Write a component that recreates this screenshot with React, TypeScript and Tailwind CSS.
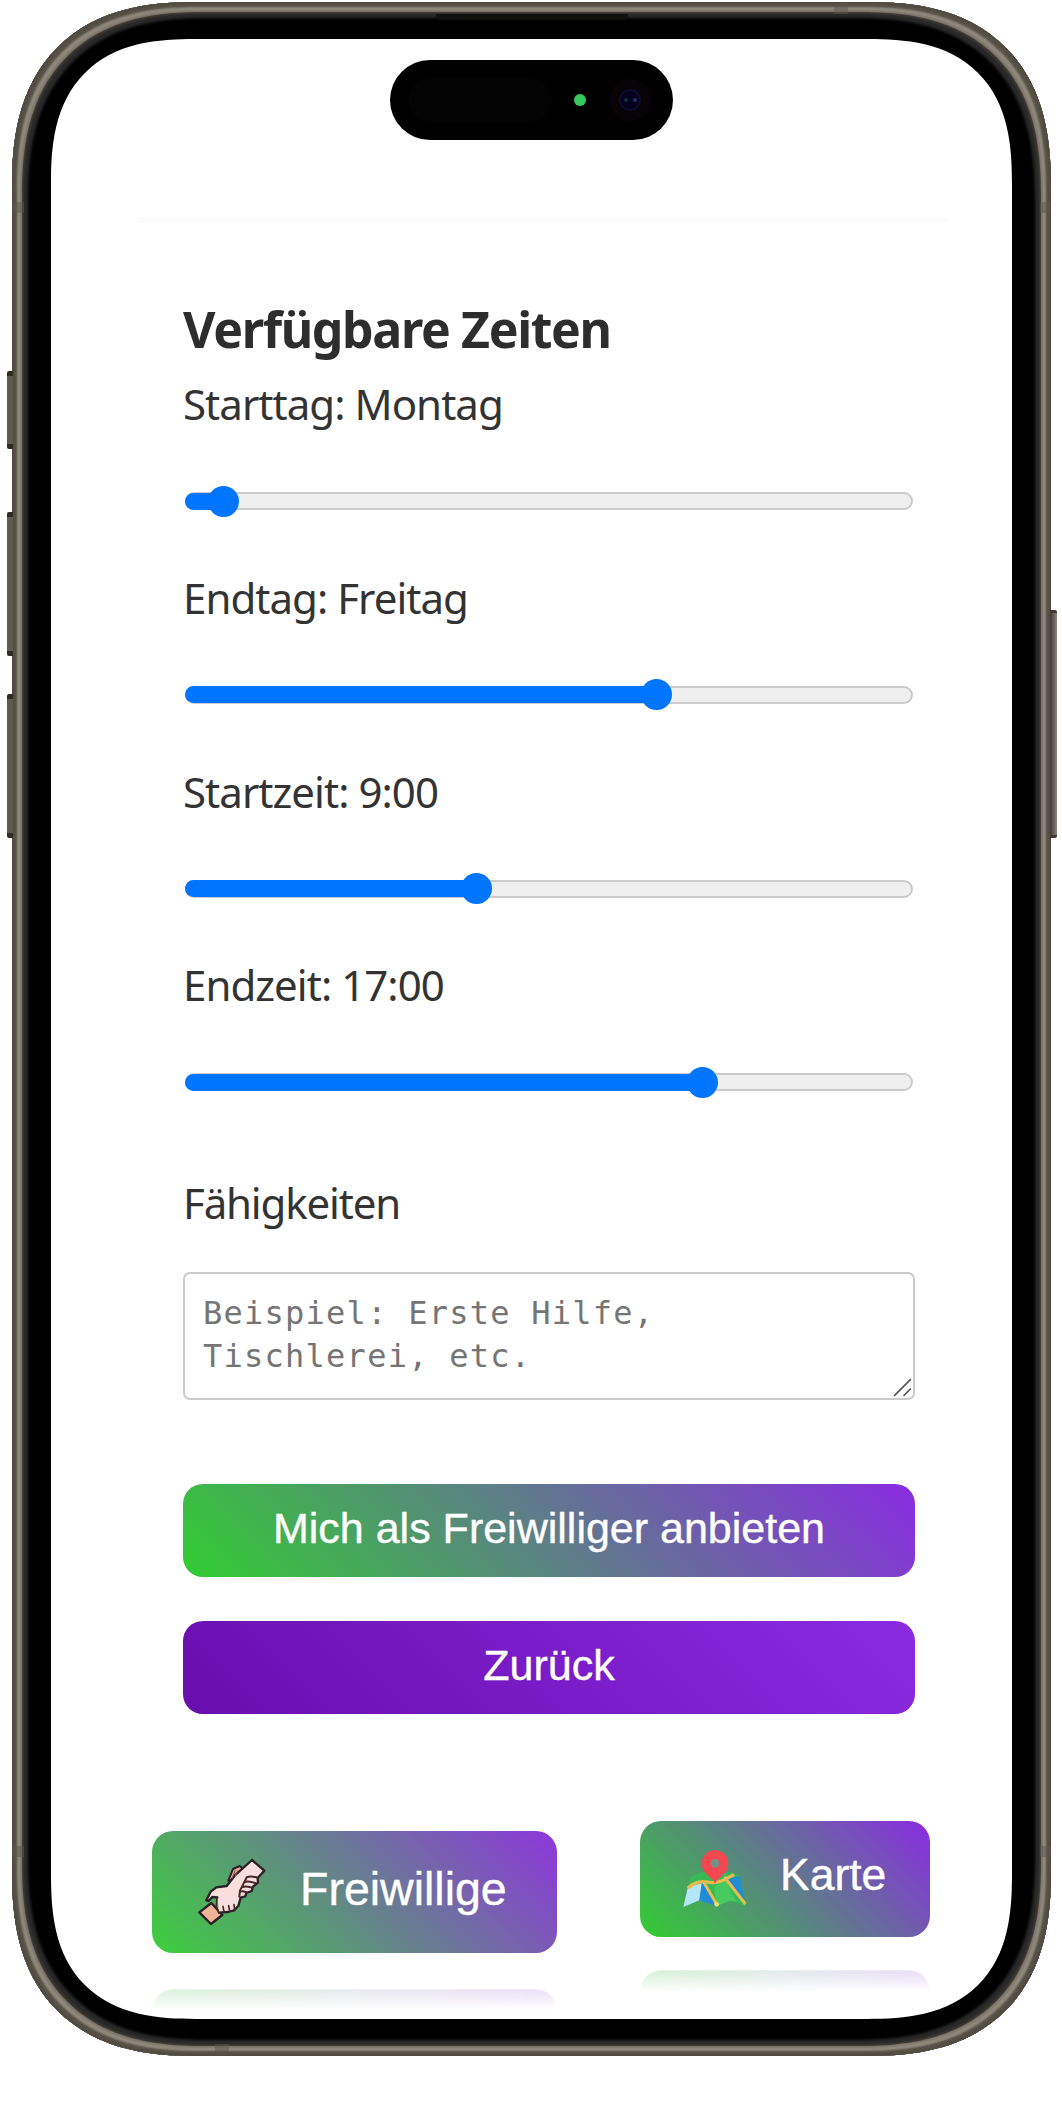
import React from "react";

const sliders = [
  { label: "Starttag: Montag", fill: 39 },
  { label: "Endtag: Freitag", fill: 472 },
  { label: "Startzeit: 9:00", fill: 292 },
  { label: "Endzeit: 17:00", fill: 518 },
];

function Slider({ label, fill }: { label: string; fill: number }) {
  return (
    <div className="flex h-[193.8px] flex-col gap-[52px]">
      <div className="text-[42px] leading-[58px] tracking-[-0.95px] whitespace-nowrap">{label}</div>
      <div className="grid h-8 items-center px-[2px]">
        <div className="col-start-1 row-start-1 h-[18px] rounded-full border-2 border-[#cbcbcb] bg-[#efefef]" />
        <div className="col-start-1 row-start-1 flex items-center">
          <div className="h-[17px] rounded-l-full bg-[#0075ff]" style={{ width: fill }} />
          <div className="-ml-4 size-[31px] rounded-full bg-[#0075ff]" />
        </div>
      </div>
    </div>
  );
}

function HandsIcon() {
  return (
    <svg className="h-[68px] w-[68px] shrink-0" viewBox="205 175 204 204" strokeLinejoin="round" strokeLinecap="round">
      <path d="M296 243 310 208 330 199 340 207 326 245Z" fill="#e9aa98" stroke="#2b2025" strokeWidth="6" />
      <path d="m209 338 36-28 33 36-34 27Z" fill="#edb495" stroke="#2b2025" strokeWidth="7" />
      <path d="M230 302 243 276 260 263 291 259 315 228 367 181 404 213 384 235 385 249 370 261 366 274 350 280 347 290 333 294 326 319 313 332 295 337 268 339 263 293 248 292 237 304Z" fill="#f8dfdb" />
      <path d="M263 293 248 292 237 304 230 302 243 276 260 263 291 259 315 228 367 181 404 213 384 235 385 249 370 261 366 274 350 280 347 290 333 294 326 319 313 332 295 337 268 339" fill="none" stroke="#2b2025" strokeWidth="7" />
      <path d="M262 292 260 322 267 339M280 320l3 16M297 318l3 17M313 315l2 16" fill="none" stroke="#46252b" strokeWidth="5" />
      <path d="M351 233c12-6 20-3 32 1M344 247c12-4 20 0 33 3M338 262c11-4 18-1 29 2M333 276c9-3 11 0 19 3M351 233l-20 40-2 18" fill="none" stroke="#46252b" strokeWidth="6" />
      <path d="m308 235 8-22M317 228l8-15" stroke="#8c4d4b" strokeWidth="3" />
    </svg>
  );
}

function MapIcon() {
  return (
    <svg className="h-[60px] w-[64px] shrink-0" viewBox="190 148 192 180">
      <path d="m211 234 34-18 94 3 21 11 19 91-47-17-43 16-49-19-48 21Z" fill="#37b957" />
      <path d="m205 261 42-10-8 51-48 20Z" fill="#b5e5f9" />
      <path d="m247 247 12 1 31 72-51-18Z" fill="#218bd5" />
      <path d="m318 239 42-10 16 76Z" fill="#218bd5" />
      <path d="m283 260 36-17 30 61-20-1-39 17Z" fill="#47cb5e" />
      <path d="M204 265c23-20 42-22 66-17 27 6 48-11 73-23" fill="none" stroke="#e5bd4d" strokeWidth="10" />
      <path d="m252 247 39 67M314 232l63 81" fill="none" stroke="#e7be4f" strokeWidth="9" />
      <circle cx="291" cy="314" r="7" fill="#eddf6b" />
      <path d="M286 252c-8-21-40-29-40-61a40 40 0 0 1 80 0c0 32-30 39-40 61Z" fill="#f44850" />
      <circle cx="286" cy="191" r="13" fill="#759087" />
    </svg>
  );
}

export default function App() {
  return (
    <div className="h-[2128px] w-[1062px] overflow-hidden bg-white pt-[2px] pl-[12px] font-['Noto_Sans',sans-serif] text-[#333]">
      <div className="relative h-[2054px] w-[1039px] rounded-[158px] bg-black px-[39px] py-[37px] shadow-[inset_0_0_1px_2px_#514c42,inset_0_0_2px_5px_#565147,inset_0_0_1px_8px_#8f897d,inset_0_0_1px_10px_#827b70,inset_0_0_1px_12px_#393530,inset_0_0_3px_16px_#292a29] supports-[corner-shape:squircle]:rounded-[185px] supports-[corner-shape:squircle]:[corner-shape:superellipse(1.3)]">
        {/* Hardware keys on both edges of the frame */}
        <div className="absolute top-[369px] -left-[5px] flex w-[6px] flex-col">
          <span className="h-[78px] rounded-l-[2px] border-y-[5px] border-[#302c23] bg-[#615b4e]" />
          <span className="mt-[63px] h-[144px] rounded-l-[2px] border-y-[5px] border-[#302c23] bg-[#615b4e]" />
          <span className="mt-[38px] h-[144px] rounded-l-[2px] border-y-[5px] border-[#302c23] bg-[#615b4e]" />
        </div>
        <div className="absolute top-[608px] -right-[6px] h-[228px] w-[7px] rounded-r-[2px] border-y-[3px] border-[#403a32] bg-gradient-to-r from-[#403a32] to-[#8b857b]" />
        {/* Antenna bands and earpiece */}
        <div className="absolute inset-x-0 top-[200px] flex h-[1655px] flex-col justify-between">
          <div className="flex justify-between">
            <span className="h-[11px] w-[12px] bg-[#59554d]/50" />
            <span className="h-[11px] w-[11px] bg-[#59554d]/50" />
          </div>
          <div className="flex justify-between">
            <span className="h-[11px] w-[12px] bg-[#59554d]/50" />
            <span className="h-[11px] w-[11px] bg-[#59554d]/50" />
          </div>
        </div>
        <div className="absolute top-[1px] left-[822px] h-[11px] w-[14px] bg-[#59554d]/50" />
        <div className="absolute bottom-[1px] left-[203px] h-[11px] w-[14px] bg-[#59554d]/50" />
        <div className="absolute top-[12px] left-[424px] h-[6px] w-[192px] rounded-b-[4px] bg-[#10100f]" />

        <div className="flex h-[1980px] w-[961px] flex-col overflow-hidden rounded-[120px] bg-white pt-[21px] supports-[corner-shape:squircle]:rounded-[145px] supports-[corner-shape:squircle]:[corner-shape:superellipse(1.38)]">
          <div className="flex h-[80px] w-[283px] shrink-0 items-center self-center rounded-full bg-black pl-[19px]">
            <div className="h-[46px] w-[143px] rounded-full bg-[#030303]" />
            <div className="ml-[22px] size-[12px] rounded-full bg-[#35ca5b]" />
            <div className="ml-[23px] flex size-[42px] items-center justify-center rounded-full bg-[#080307]">
              <div className="flex size-[22px] items-center justify-center gap-[5px] rounded-full border-2 border-[#0b0d2a] bg-[#03031c]">
                <span className="size-[4px] rounded-full bg-[#15304b]" />
                <span className="size-[4px] rounded-full bg-[#302d70]" />
              </div>
            </div>
          </div>

          <main className="mt-[77px] ml-[87px] w-[810px] shrink-0 border-t-[6px] border-[#fcfcfc] pt-[72px] pr-[33px] pl-[45px]">
            <h1 className="h-[80px] text-[50px] leading-[68px] font-bold tracking-[-1.35px] whitespace-nowrap text-[#2d2d2d]">Verfügbare Zeiten</h1>
            <div className="flex flex-col">
              {sliders.map((s) => (
                <Slider key={s.label} {...s} />
              ))}
            </div>
            <div className="flex flex-col gap-[40px] pt-[24px]">
              <div className="text-[42px] leading-[58px] tracking-[-1.15px]">Fähigkeiten</div>
              <div className="flex h-[128px] items-end justify-between rounded-[7px] border-2 border-[#cbcbcb] pl-[18px]">
                <p className="h-[106px] font-['DejaVu_Sans_Mono',monospace] text-[32px] leading-[43px] tracking-[1.25px] text-[#757575]">
                  Beispiel: Erste Hilfe,
                  <br />
                  Tischlerei, etc.
                </p>
                <svg className="size-[21px]" viewBox="0 0 20 20" stroke="#555" strokeWidth="1.5">
                  <path d="M2 18 18 2M11 18l7-7" />
                </svg>
              </div>
            </div>
            <div className="flex flex-col gap-[44px] pt-[84px] font-['Liberation_Sans',sans-serif] text-[43px] whitespace-nowrap text-white [-webkit-text-stroke:0.4px_white]">
              <button className="flex h-[93px] items-center justify-center rounded-[20px] bg-[linear-gradient(45deg,#32cd32,#8a2be2)] pb-[4px]">Mich als Freiwilliger anbieten</button>
              <button className="flex h-[93px] items-center justify-center rounded-[20px] bg-[linear-gradient(45deg,#6a0dad,#8a2be2)] pb-[4px]">Zurück</button>
            </div>
          </main>

          <nav className="flex w-[879px] items-start justify-between pt-[107px] pl-[101px] font-['Liberation_Sans',sans-serif] text-white [-webkit-text-stroke:0.4px_white]">
            <div className="flex w-[405px] flex-col gap-[36px] pt-[10px]">
              <button className="flex h-[122px] items-center gap-[34px] rounded-[21px] bg-[linear-gradient(45deg,#3dcf3d,#8e36dc)] pl-[46px] text-[46.5px]">
                <HandsIcon />
                <span className="pb-[5px] whitespace-nowrap">Freiwillige</span>
              </button>
              <div className="h-[21px] rounded-t-[21px] bg-[linear-gradient(90deg,#d9f3d9,#e7e9ed,#e9def6)] blur-[1px] [mask-image:linear-gradient(to_bottom,black,transparent)]" />
            </div>
            <div className="flex w-[290px] flex-col gap-[33px]">
              <button className="flex h-[116px] items-center gap-[33px] rounded-[21px] bg-[linear-gradient(45deg,#32cd32,#8a2be2)] pl-[43px] text-[44.5px]">
                <MapIcon />
                <span className="pb-[7px] whitespace-nowrap">Karte</span>
              </button>
              <div className="h-[22px] rounded-t-[21px] bg-[linear-gradient(90deg,#d3f0d3,#e2e8ea,#e7dcf6)] blur-[1px] [mask-image:linear-gradient(to_bottom,black,transparent)]" />
            </div>
          </nav>
        </div>
      </div>
    </div>
  );
}
